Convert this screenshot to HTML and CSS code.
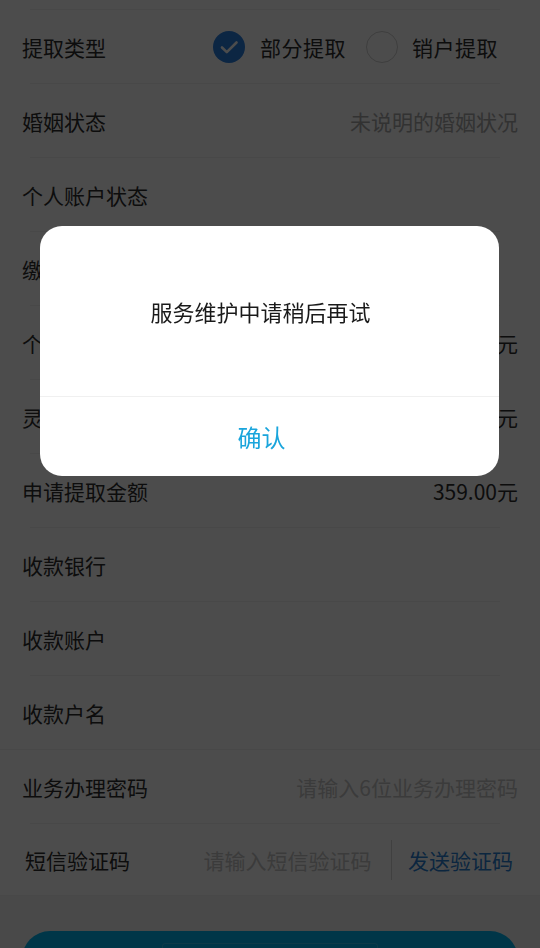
FILE: index.html
```html
<!DOCTYPE html>
<html lang="zh-CN">
<head>
<meta charset="utf-8">
<title>提取申请</title>
<link rel="stylesheet" href="styles.css">
</head>
<body>
<div class="page">
  <div class="stub"></div>
  <div class="sep"></div>

  <div class="row">
    <span class="label">提取类型</span>
    <div class="radios">
      <span class="radio">
        <svg class="check" viewBox="0 0 32 32" width="32" height="32"><circle cx="16" cy="16" r="16" fill="#2b7fe0"/><path d="M9 16.5l4.8 4.6L23.5 11.5" fill="none" stroke="#fff" stroke-width="2.6" stroke-linecap="round" stroke-linejoin="round"/></svg>
        <span class="radio-text">部分提取</span>
      </span>
      <span class="radio">
        <span class="empty"></span>
        <span class="radio-text">销户提取</span>
      </span>
    </div>
  </div>
  <div class="sep"></div>

  <div class="row">
    <span class="label">婚姻状态</span>
    <span class="value muted">未说明的婚姻状况</span>
  </div>
  <div class="sep"></div>

  <div class="row">
    <span class="label">个人账户状态</span>
  </div>
  <div class="sep"></div>

  <div class="row">
    <span class="label">缴存状态</span>
  </div>
  <div class="sep"></div>

  <div class="row">
    <span class="label">个人账户余额</span>
    <span class="value">12359.00元</span>
  </div>
  <div class="sep"></div>

  <div class="row">
    <span class="label">灵活提取金额</span>
    <span class="value">359.00元</span>
  </div>
  <div class="sep"></div>

  <div class="row">
    <span class="label">申请提取金额</span>
    <span class="value">359.00元</span>
  </div>
  <div class="sep"></div>

  <div class="row">
    <span class="label">收款银行</span>
  </div>
  <div class="sep"></div>

  <div class="row">
    <span class="label">收款账户</span>
  </div>
  <div class="sep"></div>

  <div class="row">
    <span class="label">收款户名</span>
  </div>
  <div class="sep full"></div>

  <div class="row">
    <span class="label">业务办理密码</span>
    <span class="value placeholder">请输入6位业务办理密码</span>
  </div>
  <div class="sep"></div>

  <div class="row sms">
    <span class="label">短信验证码</span>
    <span class="sms-input placeholder">请输入短信验证码</span>
    <span class="vbar"></span>
    <span class="send">发送验证码</span>
  </div>
  <div class="sep full"></div>

  <div class="footer">
    <div class="submit"><div class="submit-inner"></div></div>
  </div>
</div>

<div class="mask"></div>
<div class="dialog">
  <div class="dialog-msg">服务维护中请稍后再试</div>
  <div class="dialog-btn">确认</div>
</div>
</body>
</html>
```

FILE: styles.css
```css
* { box-sizing: border-box; }

html, body {
  margin: 0;
  padding: 0;
  background: #ffffff;
  font-family: "Noto Sans CJK SC", "Noto Sans", sans-serif;
  overflow: hidden;
}

.page {
  width: 540px;
  height: 948px;
  background: #ffffff;
  display: flex;
  flex-direction: column;
  overflow: hidden;
}

.page > * {
  flex-shrink: 0;
}

.stub {
  height: 9px;
}

.sep {
  height: 1px;
  background: #f0f0f0;
  margin: 0 40px 0 30px;
}

.sep.full {
  margin: 0;
}

.row {
  height: 73px;
  display: flex;
  align-items: center;
  justify-content: space-between;
  padding: 0 22px;
  font-size: 21px;
  color: #2e2e2e;
}

.label {
  white-space: nowrap;
}

.value {
  color: #2e2e2e;
  white-space: nowrap;
}

.muted {
  color: #a8a8a8;
}

.placeholder {
  color: #c6c6c6;
}

.radios {
  display: flex;
  align-items: center;
  padding-right: 20px;
}

.radio {
  display: flex;
  align-items: center;
  gap: 15px;
}

.radio + .radio {
  margin-left: 20px;
  gap: 14px;
}

.radio-text {
  letter-spacing: 0.5px;
}

.check {
  display: block;
}

.empty {
  width: 32px;
  height: 32px;
  border-radius: 50%;
  border: 1.5px solid #cfcfcf;
}

.row.sms {
  height: 71px;
  padding: 0 27px 0 25px;
  justify-content: flex-start;
}

.sms-input {
  margin-left: auto;
  white-space: nowrap;
}

.vbar {
  width: 1.5px;
  height: 40px;
  background: #d8d8d8;
  margin: 0 16px 0 19px;
}

.send {
  color: #2a7fd4;
  white-space: nowrap;
}

.footer {
  flex: 1 0 auto;
  background: #f6f6f6;
  padding: 35px 22px 0;
}

.submit {
  height: 56px;
  border-radius: 28px;
  background: #00b4f0;
  padding-top: 12px;
}

.submit-inner {
  width: 216px;
  height: 24px;
  margin: 0 auto;
  border: 1px solid rgba(255, 255, 255, 0.18);
  border-radius: 3px;
}

.mask {
  position: fixed;
  inset: 0;
  background: rgba(0, 0, 0, 0.7);
}

.dialog {
  position: fixed;
  left: 40px;
  top: 226px;
  width: 459px;
  height: 250px;
  background: #ffffff;
  border-radius: 22px;
  display: flex;
  flex-direction: column;
  overflow: hidden;
}

.dialog-msg {
  height: 171px;
  display: flex;
  align-items: center;
  justify-content: center;
  padding-right: 18px;
  font-size: 22px;
  color: #1a1a1a;
  border-bottom: 1px solid #f0f0f0;
}

.dialog-btn {
  flex: 1;
  display: flex;
  align-items: center;
  justify-content: center;
  padding-right: 16px;
  font-size: 24px;
  color: #1aa5dc;
}
```
